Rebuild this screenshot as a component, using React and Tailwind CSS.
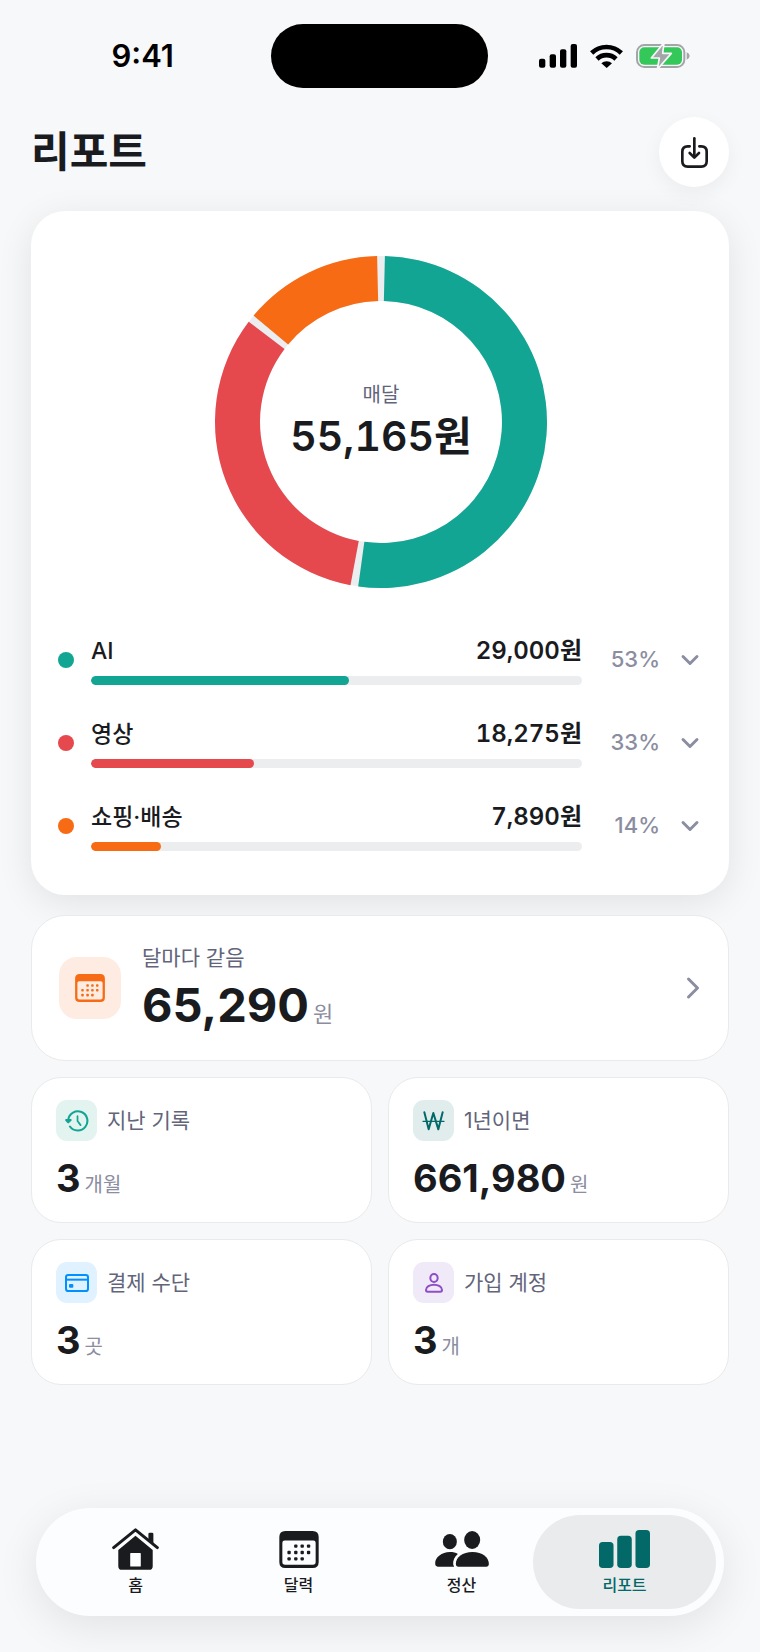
import React from 'react'
import { useState } from 'react';
import { ChevronDown, ChevronRight } from 'lucide-react';

const categories = [
  { id: 'ai', name: 'AI', amount: 29000, percent: 53, color: '#12a594' },
  { id: 'video', name: '영상', amount: 18275, percent: 33, color: '#e5484d' },
  { id: 'shopping', name: '쇼핑·배송', amount: 7890, percent: 14, color: '#f76b15' },
];

const total = categories.reduce((sum, c) => sum + c.amount, 0);

const won = (n) => n.toLocaleString('en-US');

function SignalIcon() {
  return (
    <svg className="w-[38px] h-6" viewBox="0 0 114 72" fill="currentColor" aria-hidden="true">
      <rect x="0" y="44" width="19" height="27" rx="6" />
      <rect x="32" y="31" width="19" height="40" rx="6" />
      <rect x="63" y="16" width="19" height="55" rx="6" />
      <rect x="95" y="0" width="19" height="71" rx="6" />
    </svg>
  );
}

function WifiIcon() {
  return (
    <svg className="w-[33px] h-6" viewBox="0 0 99 72" aria-hidden="true">
      <g fill="none" stroke="currentColor" strokeWidth="14">
        <path d="M5 27 A64 64 0 0 1 94 27" />
        <path d="M21 45 A41 41 0 0 1 78 45" />
      </g>
      <path d="M50 72 L34 58 A23 23 0 0 1 66 58 Z" fill="currentColor" />
    </svg>
  );
}

function BatteryIcon() {
  return (
    <svg className="w-[54px] h-6" viewBox="0 0 162 72" aria-hidden="true">
      <rect x="3" y="3" width="142" height="66" rx="22" fill="none" stroke="#a3a5a8" strokeWidth="6" />
      <path d="M152 25 Q161 29 161 36 Q161 43 152 47 Z" fill="#a3a5a8" />
      <rect x="10" y="10" width="128" height="52" rx="15" fill="#34c759" />
      <path d="M84 -4 L46 42 L70 42 L64 76 L106 28 L80 28 Z" fill="#a3a5a8" stroke="#f7f8fa" strokeWidth="5" strokeLinejoin="round" />
    </svg>
  );
}

function ExportIcon() {
  return (
    <svg className="w-[27px] h-[31px]" viewBox="0 0 81 93" fill="none" stroke="currentColor" strokeWidth="8" strokeLinecap="round" strokeLinejoin="round" aria-hidden="true">
      <path d="M26 28 H20 Q4 28 4 44 V73 Q4 89 20 89 H61 Q77 89 77 73 V44 Q77 28 61 28 H55" />
      <path d="M40 4 V59" />
      <path d="M26 48 L40 62 L54 48" />
    </svg>
  );
}

function HomeIcon() {
  return (
    <svg className="w-[47px] h-[42px]" viewBox="0 0 142 126" fill="currentColor" aria-hidden="true">
      <path d="M5 59 L71 5 L137 59" fill="none" stroke="currentColor" strokeWidth="9" strokeLinecap="round" strokeLinejoin="round" />
      <path d="M110 34 V18 Q110 14 114 14 H121 Q125 14 125 18 V46 Z" />
      <path fillRule="evenodd" d="M71 23 L123 66 V115 Q123 126 112 126 H30 Q19 126 19 115 V66 Z M57 75 Q55 75 55 77 V114 Q55 116 57 116 H85 Q87 116 87 114 V77 Q87 75 85 75 Z" />
    </svg>
  );
}

function CalendarIcon({ className }) {
  const dots = [[49, 45], [68, 45], [87, 45], [29, 64], [49, 64], [68, 64], [87, 64], [29, 83], [49, 83], [68, 83]];
  return (
    <svg className={className} viewBox="0 0 117 110" fill="currentColor" aria-hidden="true">
      <path fillRule="evenodd" d="M18 0 H99 Q117 0 117 18 V92 Q117 110 99 110 H18 Q0 110 0 92 V18 Q0 0 18 0 Z M16 28 Q9 28 9 35 V92 Q9 100 17 100 H100 Q108 100 108 92 V35 Q108 28 101 28 Z" />
      {dots.map(([x, y]) => (
        <rect key={`${x}-${y}`} x={x - 5} y={y - 5} width="10" height="10" rx="3" />
      ))}
    </svg>
  );
}

function PeopleIcon() {
  return (
    <svg className="w-[54px] h-9" viewBox="0 0 161 108" fill="currentColor" aria-hidden="true">
      <ellipse cx="44" cy="32" rx="21" ry="23" />
      <ellipse cx="111" cy="27" rx="24" ry="27" />
      <path d="M8 107 Q0 107 0 97 C0 79 20 63 44 63 C54 63 62 65 68 69 C58 77 53 89 54 100 Q55 104 57 107 Z" />
      <path d="M70 107 Q62 107 62 98 C62 80 82 63 112 63 C142 63 161 80 161 98 Q161 107 153 107 Z" />
    </svg>
  );
}

function ChartIcon() {
  return (
    <svg className="w-[51px] h-[38px]" viewBox="0 0 151 112" fill="currentColor" aria-hidden="true">
      <rect x="0" y="35" width="43" height="77" rx="11" />
      <rect x="54" y="17" width="43" height="95" rx="11" />
      <rect x="108" y="0" width="43" height="112" rx="11" />
    </svg>
  );
}

function HistoryIcon() {
  return (
    <svg className="w-6 h-[22px]" viewBox="0 0 69 64" fill="none" stroke="currentColor" strokeWidth="6" strokeLinecap="round" strokeLinejoin="round" aria-hidden="true">
      <path d="M9 28 A28 28 0 1 1 14 48" />
      <path d="M3 29 H16 L9 36 Z" fill="currentColor" />
      <path d="M36 18 V32 L45 44" strokeWidth="5" />
    </svg>
  );
}

function WonIcon() {
  return (
    <svg className="w-[23px] h-5" viewBox="0 0 69 60" fill="none" stroke="currentColor" strokeWidth="6" strokeLinecap="round" strokeLinejoin="round" aria-hidden="true">
      <path d="M7 4 L20 55 L34 6 L49 55 L62 4" />
      <path d="M3 31 H66" strokeWidth="4" />
    </svg>
  );
}

function CardIcon() {
  return (
    <svg className="w-6 h-[18px]" viewBox="0 0 72 54" fill="none" stroke="currentColor" strokeWidth="6" aria-hidden="true">
      <rect x="3" y="3" width="66" height="48" rx="7" />
      <path d="M3 17 H69" />
      <rect x="12" y="30" width="13" height="11" rx="3" fill="currentColor" stroke="none" />
    </svg>
  );
}

function PersonIcon() {
  return (
    <svg className="w-[18px] h-5" viewBox="0 0 54 60" fill="none" stroke="currentColor" strokeWidth="6" strokeLinejoin="round" aria-hidden="true">
      <ellipse cx="27" cy="15" rx="11" ry="12" />
      <path d="M8 56 Q3 56 3 51 C3 42 14 35 27 35 C40 35 51 42 51 51 Q51 56 46 56 Z" />
    </svg>
  );
}

// one ring slice between two angles, 0deg is at the top
function slicePath(start, end) {
  const point = (r, deg) => {
    const a = ((deg - 90) * Math.PI) / 180;
    return `${166 + r * Math.cos(a)} ${166 + r * Math.sin(a)}`;
  };
  const large = end - start > 180 ? 1 : 0;
  return `M${point(166, start)} A166 166 0 ${large} 1 ${point(166, end)} L${point(121, end)} A121 121 0 ${large} 0 ${point(121, start)} Z`;
}

function Donut() {
  let angle = 0;
  const slices = categories.map((c) => {
    const start = angle;
    angle += (c.amount / total) * 360;
    return { id: c.id, color: c.color, d: slicePath(start + 1.35, angle - 1.35) };
  });

  return (
    <div className="grid place-items-center">
      <svg className="col-start-1 row-start-1 size-[332px]" viewBox="0 0 332 332" aria-hidden="true">
        <circle cx="166" cy="166" r="143.5" fill="none" stroke="#ecedef" strokeWidth="45" />
        {slices.map((s) => (
          <path key={s.id} d={s.d} fill={s.color} />
        ))}
      </svg>
      <div className="col-start-1 row-start-1 pt-1 text-center">
        <p className="text-[20px] leading-6 text-[#62647a]">매달</p>
        <p className="text-[41px] leading-[58px] font-semibold tabular-nums">{won(total)}원</p>
      </div>
    </div>
  );
}

function CategoryRow({ item, open, onToggle }) {
  return (
    <li>
      <button type="button" aria-expanded={open} onClick={onToggle} className="w-full flex items-center text-left py-4">
        <span className="size-4 rounded-full shrink-0" style={{ backgroundColor: item.color }}></span>
        <span className="ml-[17px] flex-grow flex flex-col gap-2">
          <span className="flex justify-between text-[24px] leading-[34px]">
            <span className="text-[23px] font-medium">{item.name}</span>
            <span className="font-semibold tabular-nums">{won(item.amount)}원</span>
          </span>
          <span className="h-[9px] rounded-full bg-[#ecedef] overflow-hidden">
            <span
              className="block h-full rounded-full"
              style={{ width: `${(item.amount / total) * 100}%`, backgroundColor: item.color }}
            ></span>
          </span>
        </span>
        <span className="w-[78px] text-right text-[22px] font-medium text-[#8b8da0]">{item.percent}%</span>
        <ChevronDown className="ml-4 size-7 text-[#8b8da0]" strokeWidth={2.5} />
      </button>
    </li>
  );
}

function StatCard({ icon, tileClass, label, value, unit }) {
  return (
    <button type="button" className="h-[146px] rounded-[30px] border border-[#e9eaec] bg-white px-6 pt-[22px] flex flex-col justify-start gap-[14px] text-left">
      <span className="flex items-center gap-[10px]">
        <span className={`size-[41px] rounded-[11px] flex items-center justify-center ${tileClass}`}>{icon}</span>
        <span className="text-[21px] leading-[34px] text-[#62647a]">{label}</span>
      </span>
      <span className="flex items-baseline gap-1 leading-[46px]">
        <span className="text-[38px] font-bold">{value}</span>
        <span className="text-[20px] text-[#8b8da0]">{unit}</span>
      </span>
    </button>
  );
}

const stats = [
  { label: '지난 기록', value: '3', unit: '개월', tileClass: 'bg-[#e2f3f0] text-[#12a594]', icon: <HistoryIcon /> },
  { label: '1년이면', value: '661,980', unit: '원', tileClass: 'bg-[#e0edec] text-[#026868]', icon: <WonIcon /> },
  { label: '결제 수단', value: '3', unit: '곳', tileClass: 'bg-[#e0f1ff] text-[#0090ff]', icon: <CardIcon /> },
  { label: '가입 계정', value: '3', unit: '개', tileClass: 'bg-[#f0e9f8] text-[#8e4ec6]', icon: <PersonIcon /> },
];

const tabs = [
  { id: 'home', label: '홈', icon: <HomeIcon /> },
  { id: 'calendar', label: '달력', icon: <CalendarIcon className="w-10 h-[37px]" /> },
  { id: 'settle', label: '정산', icon: <PeopleIcon /> },
  { id: 'report', label: '리포트', icon: <ChartIcon /> },
];

function App() {
  const [openRow, setOpenRow] = useState(null);
  const [activeTab, setActiveTab] = useState('report');

  return (
    <div className="min-h-screen flex flex-col bg-[#f7f8fa] text-[#1a1b1e] font-['Inter','Noto_Sans_CJK_KR',sans-serif]">

      <div className="pt-6 grid grid-cols-3 items-center text-black">
        <span className="pl-8 text-center text-[31px] leading-[64px] font-semibold">9:41</span>
        <div className="w-[217px] h-16 rounded-full bg-black justify-self-center"></div>
        <div className="pl-8 flex items-center gap-[13px]">
          <SignalIcon />
          <WifiIcon />
          <BatteryIcon />
        </div>
      </div>

      <header className="mt-[29px] px-[31px] flex items-center justify-between">
        <h1 className="text-[42px] leading-[60px] font-bold">리포트</h1>
        <button type="button" aria-label="내보내기" className="size-[70px] rounded-full bg-white flex items-center justify-center shadow-[0_6px_20px_rgba(0,0,0,0.05)]">
          <ExportIcon />
        </button>
      </header>

      <main className="mt-6 px-[31px] flex flex-col">
        <section className="rounded-[34px] bg-white pl-[27px] pr-[25px] pt-[45px] pb-7 shadow-[0_8px_36px_rgba(0,0,0,0.09)]">
          <Donut />
          <ul className="mt-[30px]">
            {categories.map((c) => (
              <CategoryRow key={c.id} item={c} open={openRow === c.id} onToggle={() => setOpenRow(openRow === c.id ? null : c.id)} />
            ))}
          </ul>
        </section>

        <button type="button" className="relative mt-5 h-[146px] rounded-[34px] border border-[#e9eaec] bg-white pl-[27px] pr-[17px] flex items-center text-left">
          <span className="size-[62px] rounded-[18px] bg-[#feece2] text-[#f76b15] flex items-center justify-center">
            <CalendarIcon className="w-[30px] h-7" />
          </span>
          <span className="ml-[21px] pt-2 flex-grow flex flex-col">
            <span className="text-[21px] leading-[34px] text-[#62647a]">달마다 같음</span>
            <span className="flex items-baseline gap-1 leading-[60px]">
              <span className="text-[47px] font-bold">65,290</span>
              <span className="text-[22px] text-[#8b8da0]">원</span>
            </span>
          </span>
          <ChevronRight className="size-9 text-[#8b8da0]" strokeWidth={2} />
        </button>

        <div className="mt-4 grid grid-cols-2 gap-x-4 gap-y-4">
          {stats.map((s) => (
            <StatCard key={s.label} {...s} />
          ))}
        </div>
      </main>

      <nav className="mt-auto mb-9 mx-9 px-[18px] py-[7px] rounded-full bg-[#fcfdfe] grid grid-cols-4 shadow-[0_10px_44px_rgba(0,0,0,0.09)]">
        {tabs.map((tab) => (
          <a
            key={tab.id}
            href={`#${tab.id}`}
            onClick={() => setActiveTab(tab.id)}
            aria-current={activeTab === tab.id ? 'page' : undefined}
            className={`-mx-[10px] h-[94px] pt-1 rounded-full flex flex-col items-center justify-center ${
              activeTab === tab.id ? 'bg-[#e9ebec] text-[#026868]' : ''
            }`}
          >
            <span className="h-[42px] flex items-center">{tab.icon}</span>
            <span className="text-[16px] leading-[30px] font-medium">{tab.label}</span>
          </a>
        ))}
      </nav>
    </div>
  );
}

export default App
